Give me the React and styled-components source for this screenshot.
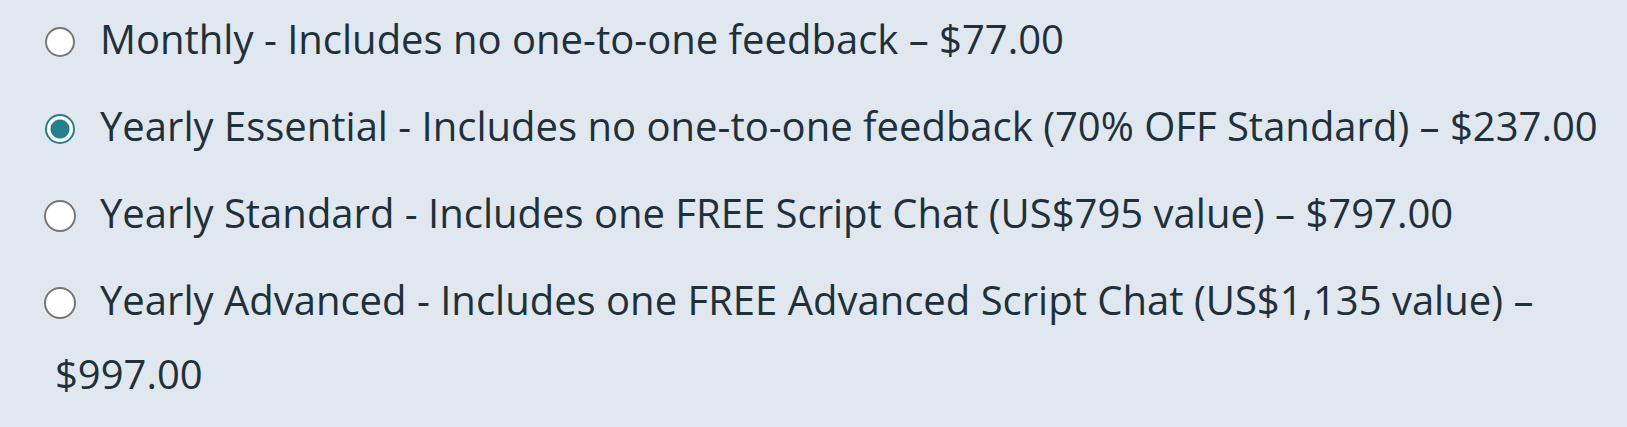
import { useState } from 'react';
import styled, { createGlobalStyle } from 'styled-components';

const GlobalStyle = createGlobalStyle`
  body {
    margin: 0;
    background: #e1e7ef;
  }
`;

const PlanList = styled.form`
  display: flex;
  flex-direction: column;
  gap: 13px;
  padding: 2px 28px 18px 44px;
  font-family: 'Open Sans', sans-serif;
  font-size: 40px;
  line-height: 74px;
  color: #20303a;
`;

const PlanLabel = styled.label`
  display: block;
  padding-left: 11px;
  cursor: pointer;
`;

const PlanRadio = styled.input`
  appearance: none;
  box-sizing: border-box;
  width: ${(props) => (props.$large ? '32px' : '30px')};
  height: ${(props) => (props.$large ? '32px' : '30px')};
  margin: ${(props) => (props.$large ? '0 24px 0 -11px' : '0 25px 0 -10px')};
  border: 2px solid #767676;
  border-radius: 50%;
  background: #fff;
  vertical-align: ${(props) => (props.$large ? '-4px' : '-3px')};

  &:checked {
    border-color: #23808c;
    background: radial-gradient(circle, #23808c 9px, #fff 10px);
  }
`;

const plans = [
  { id: 'monthly', text: 'Monthly - Includes no one-to-one feedback', price: '$77.00' },
  { id: 'essential', text: 'Yearly Essential - Includes no one-to-one feedback (70% OFF Standard)', price: '$237.00' },
  { id: 'standard', text: 'Yearly Standard - Includes one FREE Script Chat (US$795 value)', price: '$797.00', large: true },
  { id: 'advanced', text: 'Yearly Advanced - Includes one FREE Advanced Script Chat (US$1,135 value)', price: '$997.00', large: true },
];

function App() {
  const [selected, setSelected] = useState('essential');

  return (
    <>
      <GlobalStyle />
      <PlanList>
        {plans.map((plan) => (
          <PlanLabel key={plan.id} htmlFor={plan.id}>
            <PlanRadio
              type="radio"
              name="plan"
              id={plan.id}
              $large={plan.large}
              checked={selected === plan.id}
              onChange={() => setSelected(plan.id)}
            />
            {plan.text} – {plan.price}
          </PlanLabel>
        ))}
      </PlanList>
    </>
  );
}

export default App;
